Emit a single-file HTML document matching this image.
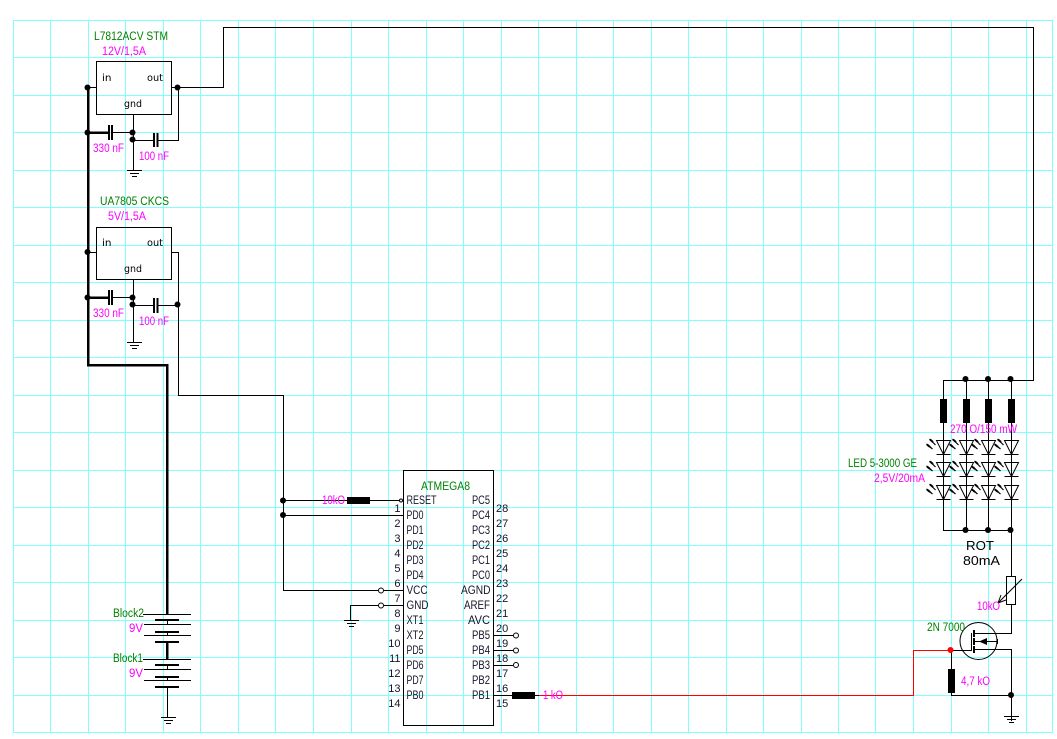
<!DOCTYPE html>
<html><head><meta charset="utf-8"><style>
html,body{margin:0;padding:0;background:#fff;width:1057px;height:739px;overflow:hidden}
svg{display:block}
text{font-family:"Liberation Sans",sans-serif;font-size:11.5px;fill:#14142a}
.n{font-size:11px}
.g{fill:#008000}.m{fill:#ff00ff}
.k{font-family:"DejaVu Sans",sans-serif;font-size:10px;fill:#000}
.w{fill:none;stroke:#000;stroke-width:1}
.t{fill:none;stroke:#000;stroke-width:2.5}
.d{fill:#000}
</style></head><body>
<svg width="1057" height="739" viewBox="0 0 1057 739" xmlns="http://www.w3.org/2000/svg">
<defs>
<g id="gnd" fill="none" stroke="#000" stroke-width="1" shape-rendering="crispEdges"><path d="M-7 .5H8M-4 3.5H5M-2 6.5H3"/></g>
<g id="led" fill="none" stroke="#000" stroke-width="1"><path d="M-7 .5H7L0 14.5ZM-7 14.5H7"/><path stroke-width="1.2" d="M-17 4L-11 9M-14 -1L-8 5"/><path stroke-width="2" d="M-16.5 4.5L-13.5 7M-13.5 -.5L-10.5 2"/></g>
</defs>
<path fill="none" stroke="#80ffff" stroke-width="1" shape-rendering="crispEdges" d="M13.5 20V733M50.5 20V733M88.5 20V733M125.5 20V733M163.5 20V733M200.5 20V733M238.5 20V733M275.5 20V733M313.5 20V733M351.5 20V733M388.5 20V733M426.5 20V733M463.5 20V733M501.5 20V733M538.5 20V733M576.5 20V733M613.5 20V733M651.5 20V733M688.5 20V733M726.5 20V733M763.5 20V733M801.5 20V733M838.5 20V733M875.5 20V733M913.5 20V733M951.5 20V733M988.5 20V733M1026.5 20V733M1052.5 20V733M13 20.5H1053M13 57.5H1053M13 95.5H1053M13 132.5H1053M13 170.5H1053M13 207.5H1053M13 245.5H1053M13 282.5H1053M13 320.5H1053M13 357.5H1053M13 395.5H1053M13 432.5H1053M13 470.5H1053M13 507.5H1053M13 545.5H1053M13 582.5H1053M13 620.5H1053M13 657.5H1053M13 695.5H1053M13 732.5H1053"/>

<g shape-rendering="crispEdges">
<path class="w" d="M96.5 61.5H171.5V114.5H96.5ZM96.5 227.5H171.5V279.5H96.5Z"/>
<path class="w" d="M88 87.5H96M171 87.5H223.5V27.5H1033.5V380.5H943.5V399M966.5 380V399M988.5 380V399M1011.5 380V399"/>
<path class="w" d="M133.5 114V170M112 132.5H133M133 140.5H155M158 140.5H178.5V87"/>
<path class="w" d="M133.5 279V342M112 297.5H133M133 305.5H155M158 305.5H178.5V252.5H171M178.5 305V395.5H283.5V590.5H378M88 252.5H96"/>
<path class="w" d="M283 500.5H347M370 500.5H399M283 515.5H403M384 590.5H403M350.5 620V605.5H378M384 605.5H403"/>
<path class="w" d="M493 635.5H513M493 650.5H513M493 665.5H513M493 695.5H512M535 695.5H539"/>
<path class="t" d="M88 86V365H167V614M88 132.5H108M88 297.5H108M167 642V659"/>
<path fill="none" stroke="#000" stroke-width="1" d="M167.5 620V624M167.5 632V635M167.5 665V669M167.5 677V680M167.5 687V717M143 614.5H191M144 624.5H191M144 635.5H191M143 659.5H191M144 669.5H191M144 680.5H191"/>
<path fill="none" stroke="#000" stroke-width="2" d="M155 620H179M155 632H179M155 642H179M155 665H179M155 677H179M155 687H179"/>
<path fill="none" stroke="#000" stroke-width="2" d="M109 125V140M112 125V140M154 133V147M157.5 133V147M109 290V305M112 290V305M154 298V313M157.5 298V313"/>
<rect class="d" x="347" y="497" width="23" height="7"/><rect class="d" x="512" y="692" width="23" height="7"/>
<rect class="d" x="940" y="399" width="7" height="24"/><rect class="d" x="963" y="399" width="7" height="24"/><rect class="d" x="985" y="399" width="7" height="24"/><rect class="d" x="1008" y="399" width="7" height="24"/>
<rect class="d" x="948" y="669" width="7" height="24"/>
<rect x="403.5" y="470.5" width="90" height="255" fill="none" stroke="#000"/>
<path class="w" d="M943.5 423V530.5H1011.5M966.5 423V530M988.5 423V530M1011.5 423V576M1011.5 604V633.5H974M1011.5 649.5H974M1011.5 649V721M974 641.5H997M997.5 639V644M951.5 650V669M951.5 693V695.5H1011M950 650.5H971.5V633"/>
<path fill="none" stroke="#000" stroke-width="2" d="M974 630V637M974 638V645M974 646V653"/>
<rect x="1006.5" y="576.5" width="9" height="28" fill="none" stroke="#000"/>
<path fill="none" stroke="#f00" stroke-width="1" d="M539 695.5H913.5V650.5H950"/>
</g>
<path class="w" d="M1022 579L998 603M998 603L1006 600M998 603L1001 595"/>
<path class="d" d="M979 641.5L987 638V645Z"/>
<circle cx="978.5" cy="641" r="18.5" class="w"/>
<use href="#gnd" x="134" y="170"/><use href="#gnd" x="134" y="342"/><use href="#gnd" x="351" y="620"/><use href="#gnd" x="168" y="717"/><use href="#gnd" x="1011" y="716"/>
<use href="#led" x="943.5" y="440"/><use href="#led" x="966.5" y="440"/><use href="#led" x="988.5" y="440"/><use href="#led" x="1011.5" y="440"/>
<use href="#led" x="943.5" y="462"/><use href="#led" x="966.5" y="462"/><use href="#led" x="988.5" y="462"/><use href="#led" x="1011.5" y="462"/>
<use href="#led" x="943.5" y="485"/><use href="#led" x="966.5" y="485"/><use href="#led" x="988.5" y="485"/><use href="#led" x="1011.5" y="485"/>
<g class="d">
<circle cx="87.5" cy="87.5" r="3"/><circle cx="87.5" cy="132.5" r="3"/><circle cx="177.5" cy="87.5" r="3"/><circle cx="132.5" cy="132.5" r="3"/><circle cx="132.5" cy="139.5" r="3"/>
<circle cx="87.5" cy="252" r="3"/><circle cx="87.5" cy="297.5" r="3"/><circle cx="132.5" cy="297.5" r="3"/><circle cx="132.5" cy="304.5" r="3"/><circle cx="177.5" cy="304.5" r="3"/>
<circle cx="283" cy="500.5" r="3"/><circle cx="283" cy="515" r="3"/>
<circle cx="965.5" cy="379" r="3"/><circle cx="988" cy="379" r="3"/><circle cx="1010.5" cy="379" r="3"/>
<circle cx="965.5" cy="530" r="3"/><circle cx="988" cy="530" r="3"/><circle cx="1010.5" cy="530" r="3"/>
<circle cx="1011" cy="695" r="3"/>
</g>
<circle cx="950.5" cy="650" r="3" fill="#f00"/>
<g fill="#fff" stroke="#000" stroke-width="1"><circle cx="381" cy="590.5" r="2.5"/><circle cx="381" cy="605.5" r="2.5"/><circle cx="516" cy="635.5" r="2.5"/><circle cx="516" cy="650.5" r="2.5"/><circle cx="516" cy="665" r="2.5"/><circle cx="401" cy="500.5" r="1.5"/></g>

<text lengthAdjust="spacingAndGlyphs" class="g" x="94" y="40" textLength="74">L7812ACV STM</text>
<text lengthAdjust="spacingAndGlyphs" class="m" x="102" y="55" textLength="44">12V/1,5A</text>
<text lengthAdjust="spacingAndGlyphs" class="k" x="102" y="81" textLength="9.5">in</text><text lengthAdjust="spacingAndGlyphs" class="k" x="147" y="81" textLength="16">out</text><text lengthAdjust="spacingAndGlyphs" class="k" x="124" y="107" textLength="18">gnd</text>
<text lengthAdjust="spacingAndGlyphs" class="m" x="93" y="152" textLength="31">330 nF</text>
<text lengthAdjust="spacingAndGlyphs" class="m" x="139" y="160" textLength="30">100 nF</text>
<text lengthAdjust="spacingAndGlyphs" class="g" x="100" y="205" textLength="69">UA7805 CKCS</text>
<text lengthAdjust="spacingAndGlyphs" class="m" x="108" y="220" textLength="38">5V/1,5A</text>
<text lengthAdjust="spacingAndGlyphs" class="k" x="102" y="246" textLength="9.5">in</text><text lengthAdjust="spacingAndGlyphs" class="k" x="147" y="246" textLength="16">out</text><text lengthAdjust="spacingAndGlyphs" class="k" x="124" y="272" textLength="18">gnd</text>
<text lengthAdjust="spacingAndGlyphs" class="m" x="93" y="317" textLength="31">330 nF</text>
<text lengthAdjust="spacingAndGlyphs" class="m" x="139" y="325" textLength="30">100 nF</text>
<text lengthAdjust="spacingAndGlyphs" class="g" x="113" y="617" textLength="31">Block2</text>
<text lengthAdjust="spacingAndGlyphs" class="m" x="129" y="632" textLength="14">9V</text>
<text lengthAdjust="spacingAndGlyphs" class="g" x="113" y="662" textLength="30">Block1</text>
<text lengthAdjust="spacingAndGlyphs" class="m" x="129" y="677" textLength="14">9V</text>

<text lengthAdjust="spacingAndGlyphs" class="g" x="421" y="490" textLength="49">ATMEGA8</text>
<text lengthAdjust="spacingAndGlyphs" class="m" x="322" y="504" textLength="23">10kO</text>
<text lengthAdjust="spacingAndGlyphs" class="m" x="543" y="699" textLength="20">1 kO</text>

<text lengthAdjust="spacingAndGlyphs" x="406.5" y="504" textLength="30">RESET</text>
<text lengthAdjust="spacingAndGlyphs" x="406.5" y="519" textLength="17">PD0</text>
<text lengthAdjust="spacingAndGlyphs" x="406.5" y="534" textLength="17">PD1</text>
<text lengthAdjust="spacingAndGlyphs" x="406.5" y="549" textLength="17">PD2</text>
<text lengthAdjust="spacingAndGlyphs" x="406.5" y="564" textLength="17">PD3</text>
<text lengthAdjust="spacingAndGlyphs" x="406.5" y="579" textLength="17">PD4</text>
<text lengthAdjust="spacingAndGlyphs" x="406.5" y="594" textLength="21">VCC</text>
<text lengthAdjust="spacingAndGlyphs" x="406.5" y="609" textLength="22">GND</text>
<text lengthAdjust="spacingAndGlyphs" x="406.5" y="624" textLength="17">XT1</text>
<text lengthAdjust="spacingAndGlyphs" x="406.5" y="639" textLength="17">XT2</text>
<text lengthAdjust="spacingAndGlyphs" x="406.5" y="654" textLength="17">PD5</text>
<text lengthAdjust="spacingAndGlyphs" x="406.5" y="669" textLength="17">PD6</text>
<text lengthAdjust="spacingAndGlyphs" x="406.5" y="684" textLength="17">PD7</text>
<text lengthAdjust="spacingAndGlyphs" x="406.5" y="699" textLength="17">PB0</text>

<text lengthAdjust="spacingAndGlyphs" x="472" y="504" textLength="18">PC5</text>
<text lengthAdjust="spacingAndGlyphs" x="472" y="519" textLength="18">PC4</text>
<text lengthAdjust="spacingAndGlyphs" x="472" y="534" textLength="18">PC3</text>
<text lengthAdjust="spacingAndGlyphs" x="472" y="549" textLength="18">PC2</text>
<text lengthAdjust="spacingAndGlyphs" x="472" y="564" textLength="18">PC1</text>
<text lengthAdjust="spacingAndGlyphs" x="472" y="579" textLength="18">PC0</text>
<text lengthAdjust="spacingAndGlyphs" x="461" y="594" textLength="29.5">AGND</text>
<text lengthAdjust="spacingAndGlyphs" x="464" y="609" textLength="26">AREF</text>
<text lengthAdjust="spacingAndGlyphs" x="468" y="624" textLength="22">AVC</text>
<text lengthAdjust="spacingAndGlyphs" x="472" y="639" textLength="18">PB5</text>
<text lengthAdjust="spacingAndGlyphs" x="472" y="654" textLength="18">PB4</text>
<text lengthAdjust="spacingAndGlyphs" x="472" y="669" textLength="18">PB3</text>
<text lengthAdjust="spacingAndGlyphs" x="472" y="684" textLength="18">PB2</text>
<text lengthAdjust="spacingAndGlyphs" x="472" y="699" textLength="18">PB1</text>

<g text-anchor="end" class="n">
<text class="n" x="400.5" y="512">1</text><text class="n" x="400.5" y="527">2</text><text class="n" x="400.5" y="542">3</text><text class="n" x="400.5" y="557">4</text><text class="n" x="400.5" y="572">5</text><text class="n" x="400.5" y="587">6</text><text class="n" x="400.5" y="602">7</text><text class="n" x="400.5" y="617">8</text><text class="n" x="400.5" y="632">9</text><text class="n" x="400.5" y="647">10</text><text class="n" x="400.5" y="662">11</text><text class="n" x="400.5" y="677">12</text><text class="n" x="400.5" y="692">13</text><text class="n" x="400.5" y="707">14</text>
</g>
<text class="n" x="496" y="512">28</text><text class="n" x="496" y="527">27</text><text class="n" x="496" y="542">26</text><text class="n" x="496" y="557">25</text><text class="n" x="496" y="572">24</text><text class="n" x="496" y="587">23</text><text class="n" x="496" y="602">22</text><text class="n" x="496" y="617">21</text><text class="n" x="496" y="632">20</text><text class="n" x="496" y="647">19</text><text class="n" x="496" y="662">18</text><text class="n" x="496" y="677">17</text><text class="n" x="496" y="692">16</text><text class="n" x="496" y="707">15</text>

<text lengthAdjust="spacingAndGlyphs" class="m" x="950" y="433" textLength="67">270 O/150 mW</text>
<text lengthAdjust="spacingAndGlyphs" class="g" x="848" y="467" textLength="69">LED 5-3000 GE</text>
<text lengthAdjust="spacingAndGlyphs" class="m" x="874" y="482" textLength="51">2,5V/20mA</text>
<text lengthAdjust="spacingAndGlyphs" x="966" y="550" style="font-size:13px;fill:#000" textLength="28">ROT</text>
<text lengthAdjust="spacingAndGlyphs" x="963" y="565" style="font-size:13px;fill:#000" textLength="37">80mA</text>
<text lengthAdjust="spacingAndGlyphs" class="m" x="977" y="610" textLength="23">10kO</text>
<text lengthAdjust="spacingAndGlyphs" class="g" x="927" y="631" textLength="38">2N 7000</text>
<text lengthAdjust="spacingAndGlyphs" class="m" x="961" y="685" textLength="29">4,7 kO</text>
</svg>
</body></html>
